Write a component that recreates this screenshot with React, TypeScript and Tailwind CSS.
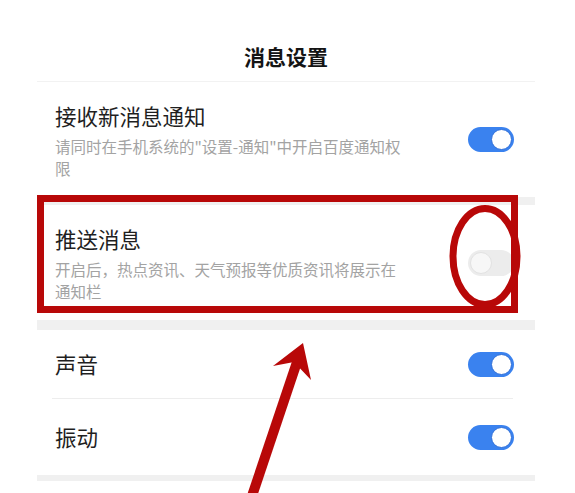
import React from 'react';

const font = { fontFamily: '"Noto Sans CJK SC", "Noto Sans", sans-serif' };

function Toggle({ on }: { on: boolean }) {
  if (on) {
    return (
      <div className="flex h-[25px] w-[46px] shrink-0 items-center justify-end rounded-full bg-[#3a82ef] pr-[2px]">
        <div className="h-[21px] w-[21px] rounded-full border border-[#3170d8] bg-white" />
      </div>
    );
  }
  return (
    <div className="flex h-[26px] w-[46px] shrink-0 items-center rounded-full bg-[#ececec] pl-[2px]">
      <div className="h-[22px] w-[22px] rounded-full border border-[#e2e2e2] bg-[#f7f7f7]" />
    </div>
  );
}

function DetailRow({ title, desc, on }: { title: string; desc: string; on: boolean }) {
  return (
    <div className="flex h-[115px] items-center justify-between pl-[18px] pr-[21px]">
      <div className="flex flex-col">
        <div className="text-[21.5px] leading-[30px] text-[#1f1f1f]">{title}</div>
        <div className="mt-[4px] w-[352px] text-[15.5px] leading-[22px] text-[#a3a3a3]">{desc}</div>
      </div>
      <Toggle on={on} />
    </div>
  );
}

function SimpleRow({ title, h }: { title: string; h: string }) {
  return (
    <div className={`flex items-center justify-between pl-[18px] pr-[21px] ${h}`}>
      <div className="text-[21.5px] leading-[30px] text-[#1f1f1f]">{title}</div>
      <Toggle on />
    </div>
  );
}

export default function App() {
  return (
    <div className="relative h-[493px] w-[575px] overflow-hidden bg-white" style={font}>
      <div className="ml-[37px] w-[498px]">
        <div className="h-[81px] pt-[42px] text-center text-[21px] font-bold leading-[28px] text-[#141414]">
          消息设置
        </div>
        <div className="h-px bg-[#f2f2f2]" />
        <DetailRow
          title="接收新消息通知"
          desc={'请同时在手机系统的"设置-通知"中开启百度通知权限'}
          on
        />
        <div className="h-[8px] bg-[#f0f0f0]" />
        <DetailRow
          title="推送消息"
          desc="开启后，热点资讯、天气预报等优质资讯将展示在通知栏"
          on={false}
        />
        <div className="h-[10px] bg-[#f0f0f0]" />
        <SimpleRow title="声音" h="h-[68px]" />
        <div className="ml-[15px] mr-[22px] h-px bg-[#ededed]" />
        <SimpleRow title="振动" h="h-[76px]" />
        <div className="h-[6px] bg-[#f0f0f0]" />
      </div>

      <svg className="pointer-events-none absolute inset-0" width="575" height="493" viewBox="0 0 575 493">
        <rect x="40.5" y="198.5" width="474" height="111" fill="none" stroke="#b80808" strokeWidth="7" />
        <ellipse cx="485" cy="256.5" rx="32" ry="48" fill="none" stroke="#b80808" strokeWidth="7" />
        <line x1="252" y1="496" x2="297" y2="362" stroke="#b80808" strokeWidth="10" />
        <polygon points="303,343 273,366 294,362 311,380" fill="#b80808" />
      </svg>
    </div>
  );
}
